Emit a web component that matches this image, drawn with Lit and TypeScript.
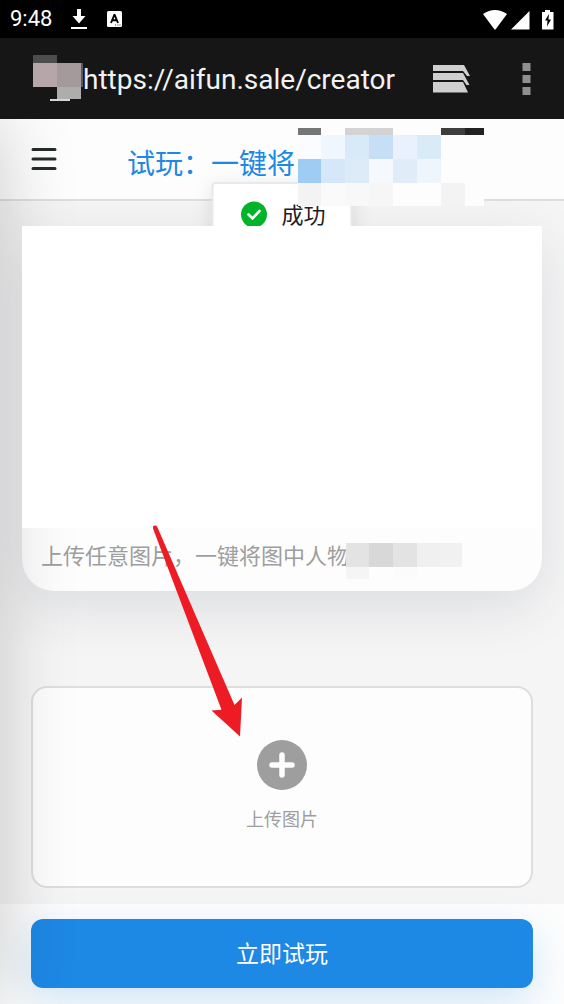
import { LitElement, html, svg, css } from "lit";
import { customElement, property } from "lit/decorators.js";

type Tile = [x: number, y: number, w: number, h: number, fill: string];

const siteTiles: Tile[] = [
  [0, 0, 24, 8, "#4d4d4d"],
  [0, 8, 24, 24, "#b6a6a9"],
  [24, 8, 24, 24, "#a59a9b"],
  [48, 8, 2, 24, "#5c5858"],
  [24, 32, 24, 12, "#adadad"],
  [17, 44, 20, 2, "#d6d6d6"],
];

const titleTiles: Tile[] = [
  [0, 0, 23, 7, "#757575"],
  [23, 0, 24, 7, "#fdfdfd"],
  [47, 0, 48, 7, "#d3d3d3"],
  [95, 0, 48, 7, "#fdfdfd"],
  [143, 0, 24, 7, "#3e3e3e"],
  [167, 0, 19, 7, "#222222"],
  [0, 7, 23, 24, "#fafcff"],
  [23, 7, 24, 24, "#eff6fe"],
  [47, 7, 24, 24, "#d8eaf8"],
  [71, 7, 24, 24, "#c7def7"],
  [95, 7, 24, 24, "#e8f1fc"],
  [119, 7, 24, 24, "#daebf8"],
  [143, 7, 43, 48, "#fdfdfd"],
  [0, 31, 23, 24, "#9fccf2"],
  [23, 31, 24, 24, "#d5e7f8"],
  [47, 31, 24, 24, "#dcebf7"],
  [71, 31, 24, 24, "#f5f9fd"],
  [95, 31, 24, 24, "#e0edf9"],
  [119, 31, 24, 24, "#eff5fd"],
  [0, 55, 23, 23, "#f3f3f3"],
  [23, 55, 24, 23, "#fafafa"],
  [47, 55, 24, 23, "#f8f8f8"],
  [71, 55, 24, 23, "#f6f6f6"],
  [95, 55, 48, 23, "#fdfdfd"],
  [143, 55, 24, 23, "#f3f3f3"],
  [167, 55, 19, 23, "#fdfdfd"],
];

const captionTiles: Tile[] = [
  [0, 0, 23, 24, "#e3e3e3"],
  [23, 0, 24, 24, "#d8d8d8"],
  [47, 0, 24, 24, "#e3e3e3"],
  [71, 0, 24, 24, "#f0f0f0"],
  [95, 0, 21, 24, "#f1f1f1"],
  [0, 24, 23, 12, "#f5f5f5"],
  [47, 24, 24, 12, "#fbfbfb"],
];

@customElement("pixel-mask")
export class PixelMask extends LitElement {
  @property({ attribute: false }) tiles: Tile[] = [];

  static styles = css`
    :host {
      display: block;
    }
    .tiles {
      display: block;
    }
  `;

  render() {
    const w = Math.max(0, ...this.tiles.map((t) => t[0] + t[2]));
    const h = Math.max(0, ...this.tiles.map((t) => t[1] + t[3]));
    return html`<svg class="tiles" width=${w} height=${h} shape-rendering="crispEdges" aria-hidden="true">
      ${this.tiles.map(
        ([x, y, tw, th, fill]) => svg`<rect x=${x} y=${y} width=${tw} height=${th} fill=${fill}></rect>`
      )}
    </svg>`;
  }
}

@customElement("app-root")
export class AppRoot extends LitElement {
  static styles = css`
    :host {
      display: flex;
      flex-direction: column;
      min-height: 100vh;
      background: #f5f5f5;
      font-family: "Noto Sans CJK SC", sans-serif;
    }
    * {
      box-sizing: border-box;
    }
    button {
      border: 0;
      padding: 0;
      background: none;
      font: inherit;
      cursor: pointer;
    }
    svg {
      display: block;
    }
    .status {
      display: flex;
      align-items: center;
      height: 38px;
      padding: 0 10px;
      background: #000;
      color: #fff;
      font: 400 22px/38px Roboto, sans-serif;
    }
    .status-left {
      display: flex;
      align-items: center;
      gap: 18px;
      flex: 1;
    }
    .status-right {
      display: flex;
      align-items: center;
    }
    .browser {
      display: flex;
      align-items: center;
      height: 81px;
      padding: 0 33px;
      background: #161616;
      color: #f2f2f2;
    }
    .site {
      padding-bottom: 2px;
    }
    .address {
      flex: 1;
      min-width: 0;
      padding-top: 2px;
      overflow: hidden;
      white-space: nowrap;
      font: 400 28px/40px Roboto, sans-serif;
    }
    .tabs {
      margin: 0 51px 0 34px;
    }
    .page {
      position: relative;
      flex: 1;
      display: flex;
      flex-direction: column;
      overflow: hidden;
    }
    .header {
      position: relative;
      display: flex;
      align-items: center;
      gap: 70px;
      height: 82px;
      padding: 0 31px;
      background: #fdfdfd;
      border-bottom: 2px solid #dedede;
    }
    .title {
      position: relative;
      margin: 0;
      padding-top: 6px;
      color: #1e88e5;
      font-size: 28px;
      line-height: 40px;
      font-weight: 400;
      white-space: nowrap;
    }
    .title-mask {
      position: absolute;
      z-index: 2;
      left: 171px;
      top: -8px;
    }
    .toast {
      position: absolute;
      z-index: 1;
      top: 63px;
      left: 50%;
      transform: translateX(-50%);
      display: flex;
      align-items: center;
      gap: 14px;
      height: 64px;
      padding: 0 25px 0 27px;
      border: 2px solid #e8e8ee;
      border-radius: 4px;
      background: #fff;
      box-shadow: 0 4px 20px rgba(0, 0, 0, 0.1);
      color: #1d2129;
      font-size: 22px;
      line-height: 32px;
      white-space: nowrap;
    }
    .toast-text {
      padding-bottom: 2px;
    }
    .content {
      flex: 1;
      display: flex;
      flex-direction: column;
      padding: 25px 22px 16px;
    }
    .card {
      margin: 0;
      border-radius: 0 0 32px 32px;
      background: #fdfdfd;
      box-shadow: 0 16px 56px rgba(40, 50, 80, 0.12);
    }
    .preview {
      position: relative;
      z-index: 5;
      height: 302px;
      background: #fff;
    }
    .caption {
      display: flex;
      align-items: flex-start;
      height: 63px;
      padding: 10px 19px 0;
      color: #9e9e9e;
      font-size: 22px;
      line-height: 32px;
      white-space: nowrap;
    }
    .caption-mask {
      margin: 5px 0 0 -3px;
    }
    .uploader {
      position: relative;
      display: flex;
      margin: 95px 9px 0;
    }
    .upload {
      flex: 1;
      display: flex;
      flex-direction: column;
      align-items: center;
      gap: 15px;
      height: 202px;
      padding-top: 52px;
      border: 2px solid #dedede;
      border-radius: 16px;
      background: #fdfdfd;
      color: #9e9e9e;
      font-size: 18px;
      line-height: 26px;
    }
    .pointer {
      position: absolute;
      z-index: 6;
      left: 50%;
      bottom: 151px;
      margin-left: -132px;
      pointer-events: none;
    }
    .footer {
      display: flex;
      padding: 15px 31px 16px;
      background: #fdfdfd;
    }
    .try {
      flex: 1;
      height: 69px;
      padding-bottom: 4px;
      border-radius: 12px;
      background: #1e88e5;
      box-shadow: 0 14px 40px rgba(30, 136, 229, 0.2);
      color: #fff;
      font-size: 23px;
      line-height: 32px;
    }
    .drawer {
      position: absolute;
      z-index: 4;
      top: 0;
      bottom: 0;
      left: -300px;
      width: 300px;
      box-shadow: 0 0 72px rgba(0, 0, 0, 0.2);
      pointer-events: none;
    }
  `;

  render() {
    return html`
      <div class="status">
        <div class="status-left">
          <span>9:48</span>
          <svg width="18" height="22" viewBox="0 0 18 22" fill="#fff" aria-hidden="true">
            <path d="M7 1h4v7h4.500L9 15.500 2.500 8H7zM1 19h16v2H1z" />
          </svg>
          <svg width="16" height="18" viewBox="0 0 16 18" aria-hidden="true">
            <rect x="1" y="1" width="15" height="16" rx="1.500" fill="#fff" />
            <path d="M5 13l3.300-8h.4L12 13M6.300 10.300h4.600" fill="none" stroke="#000" stroke-width="1.900" />
            <path d="M9 15h1M11.500 15h1M13.500 15h1" stroke="#333" />
          </svg>
        </div>
        <div class="status-right">
          <svg width="71" height="24" viewBox="0 0 71 24" fill="#fff" aria-hidden="true">
            <path d="M0 7Q12 -1 24 7L12.500 22.500h-1zM28 22.500L46.500 4v18.500z" />
            <path d="M59 5h3V3h5v2h3.500v17.500H59z" />
            <path d="M66 7l-4 6.500h2.500l-.5 6 4-7h-2.500z" fill="#000" />
          </svg>
        </div>
      </div>

      <div class="browser">
        <pixel-mask class="site" .tiles=${siteTiles}></pixel-mask>
        <div class="address">https://aifun.sale/creator</div>
        <button class="tabs" aria-label="标签页">
          <svg width="38" height="30" viewBox="0 0 38 30" fill="#cfcfcf">
            <path d="M0 1h31l6 11h-3l-4-5H0z" />
            <path d="M0 9h30l6.500 12h-3L30 16H0z" />
            <path d="M0 18h30l5 10.500H0z" />
          </svg>
        </button>
        <button aria-label="菜单">
          <svg width="9" height="34" viewBox="0 0 9 34" fill="#8f8f8f">
            <path d="M.5 1h8v8h-8zM.5 13h8v8h-8zM.5 25h8v8h-8z" />
          </svg>
        </button>
      </div>

      <div class="page">
        <header class="header">
          <button aria-label="导航">
            <svg width="26" height="24" viewBox="0 0 26 24" stroke="#252a2a" stroke-width="3" stroke-linecap="round">
              <path d="M2 2.500h22M2 12h22M2 21.500h22" />
            </svg>
          </button>
          <h1 class="title">
            试玩：一键将<pixel-mask class="title-mask" .tiles=${titleTiles}></pixel-mask>
          </h1>
          <div class="toast" role="status">
            <svg width="27" height="27" viewBox="0 0 27 27" aria-hidden="true">
              <circle cx="13.500" cy="13.500" r="13" fill="#00b42a" />
              <path d="M8 13.500l4 4 7-7.500" fill="none" stroke="#fff" stroke-width="2.600" stroke-linecap="round" />
            </svg>
            <span class="toast-text">成功</span>
          </div>
        </header>

        <main class="content">
          <figure class="card">
            <div class="preview"></div>
            <figcaption class="caption">
              <span>上传任意图片，一键将图中人物</span>
              <pixel-mask class="caption-mask" .tiles=${captionTiles}></pixel-mask>
            </figcaption>
          </figure>
          <div class="uploader">
            <button class="upload">
              <svg width="50" height="50" viewBox="0 0 50 50" aria-hidden="true">
                <circle cx="25" cy="25" r="25" fill="#9e9e9e" />
                <path d="M25 15v20M15 25h20" stroke="#fdfdfd" stroke-width="5.500" stroke-linecap="round" />
              </svg>
              <span>上传图片</span>
            </button>
            <svg class="pointer" width="94" height="214" viewBox="0 0 94 214" aria-hidden="true">
              <path d="M3 5.500a2 2 0 0 1 4.300-1.500L84.500 182l7.500-7.500L90 213.500 61.500 187.500l10-.7z" fill="#ed1c24" />
            </svg>
          </div>
        </main>

        <footer class="footer">
          <button class="try">立即试玩</button>
        </footer>
        <div class="drawer"></div>
      </div>
    `;
  }
}
